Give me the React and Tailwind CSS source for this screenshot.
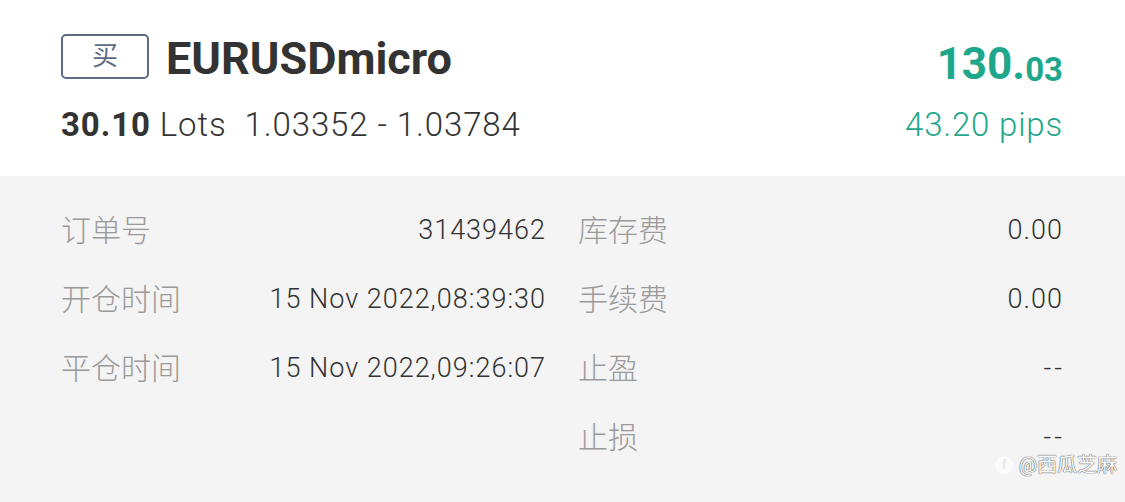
const rows = [
  [{ label: '订单号', value: '31439462' }, { label: '库存费', value: '0.00' }],
  [{ label: '开仓时间', value: '15 Nov 2022,08:39:30' }, { label: '手续费', value: '0.00' }],
  [{ label: '平仓时间', value: '15 Nov 2022,09:26:07' }, { label: '止盈', value: '--' }],
  [null, { label: '止损', value: '--' }],
];

const Cell = ({ item }) => {
  if (!item) return <div />;
  const empty = item.value === '--';
  return (
    <div className="flex items-center justify-between h-[69px]">
      <span className="text-[30px] font-light text-[#9a9a9a]">{item.label}</span>
      <span
        className={
          empty
            ? 'text-[27px] font-light tracking-[3px] text-[#333333] -mr-[2px]'
            : 'text-[27px] font-light tracking-[1px] text-[#333333]'
        }
      >
        {item.value}
      </span>
    </div>
  );
};

export default function App() {
  return (
    <div
      className="relative w-[1125px] h-[502px] overflow-hidden bg-[#f4f4f4]"
      style={{ fontFamily: 'Roboto, "Noto Sans CJK SC", sans-serif' }}
    >
      {/* Header */}
      <div className="bg-white h-[176px] pl-[61px] pr-[62px] pt-[34px]">
        <div className="flex items-start justify-between">
          <div>
            <div className="flex items-center gap-[17px] h-[45px]">
              <div className="w-[88px] h-[45px] border-2 border-[#5b6b84] rounded-[5px] flex items-center justify-center text-[26px] text-[#5b6b84]">
                买
              </div>
              <span className="mt-[3px] text-[45px] font-bold text-[#333333] leading-none">EURUSDmicro</span>
            </div>
            <div className="mt-[29px] text-[33px] font-light tracking-[0.9px] text-[#333333] leading-none">
              <span className="font-bold">30.10</span>
              <span> Lots&nbsp;&nbsp;1.03352 - 1.03784</span>
            </div>
          </div>
          <div className="flex flex-col items-end text-[#1fa78b]">
            <div className="h-[52px] flex items-end font-bold leading-none">
              <span className="text-[44px]">130.</span>
              <span className="text-[33px]">03</span>
            </div>
            <div className="mt-[22px] text-[33px] font-light tracking-[0.8px] leading-none">43.20 pips</div>
          </div>
        </div>
      </div>

      {/* Details */}
      <div className="pl-[61px] pr-[62px] pt-[20px] grid grid-cols-2 gap-x-[32px]">
        {rows.map((r, i) => (
          <div key={i} className="contents">
            <Cell item={r[0]} />
            <Cell item={r[1]} />
          </div>
        ))}
      </div>

      {/* Watermark */}
      <div className="absolute right-[8px] bottom-[22px] flex items-center gap-[6px]">
        <div className="w-[18px] h-[18px] rounded-full bg-white/70 flex items-center justify-center text-[12px] font-bold text-[#e8e8e8]">
          f
        </div>
        <span
          className="text-[20px] text-white"
          style={{ textShadow: '0 0 1px #444, 0 0 1px #444' }}
        >
          @西瓜芝麻
        </span>
      </div>
    </div>
  );
}
